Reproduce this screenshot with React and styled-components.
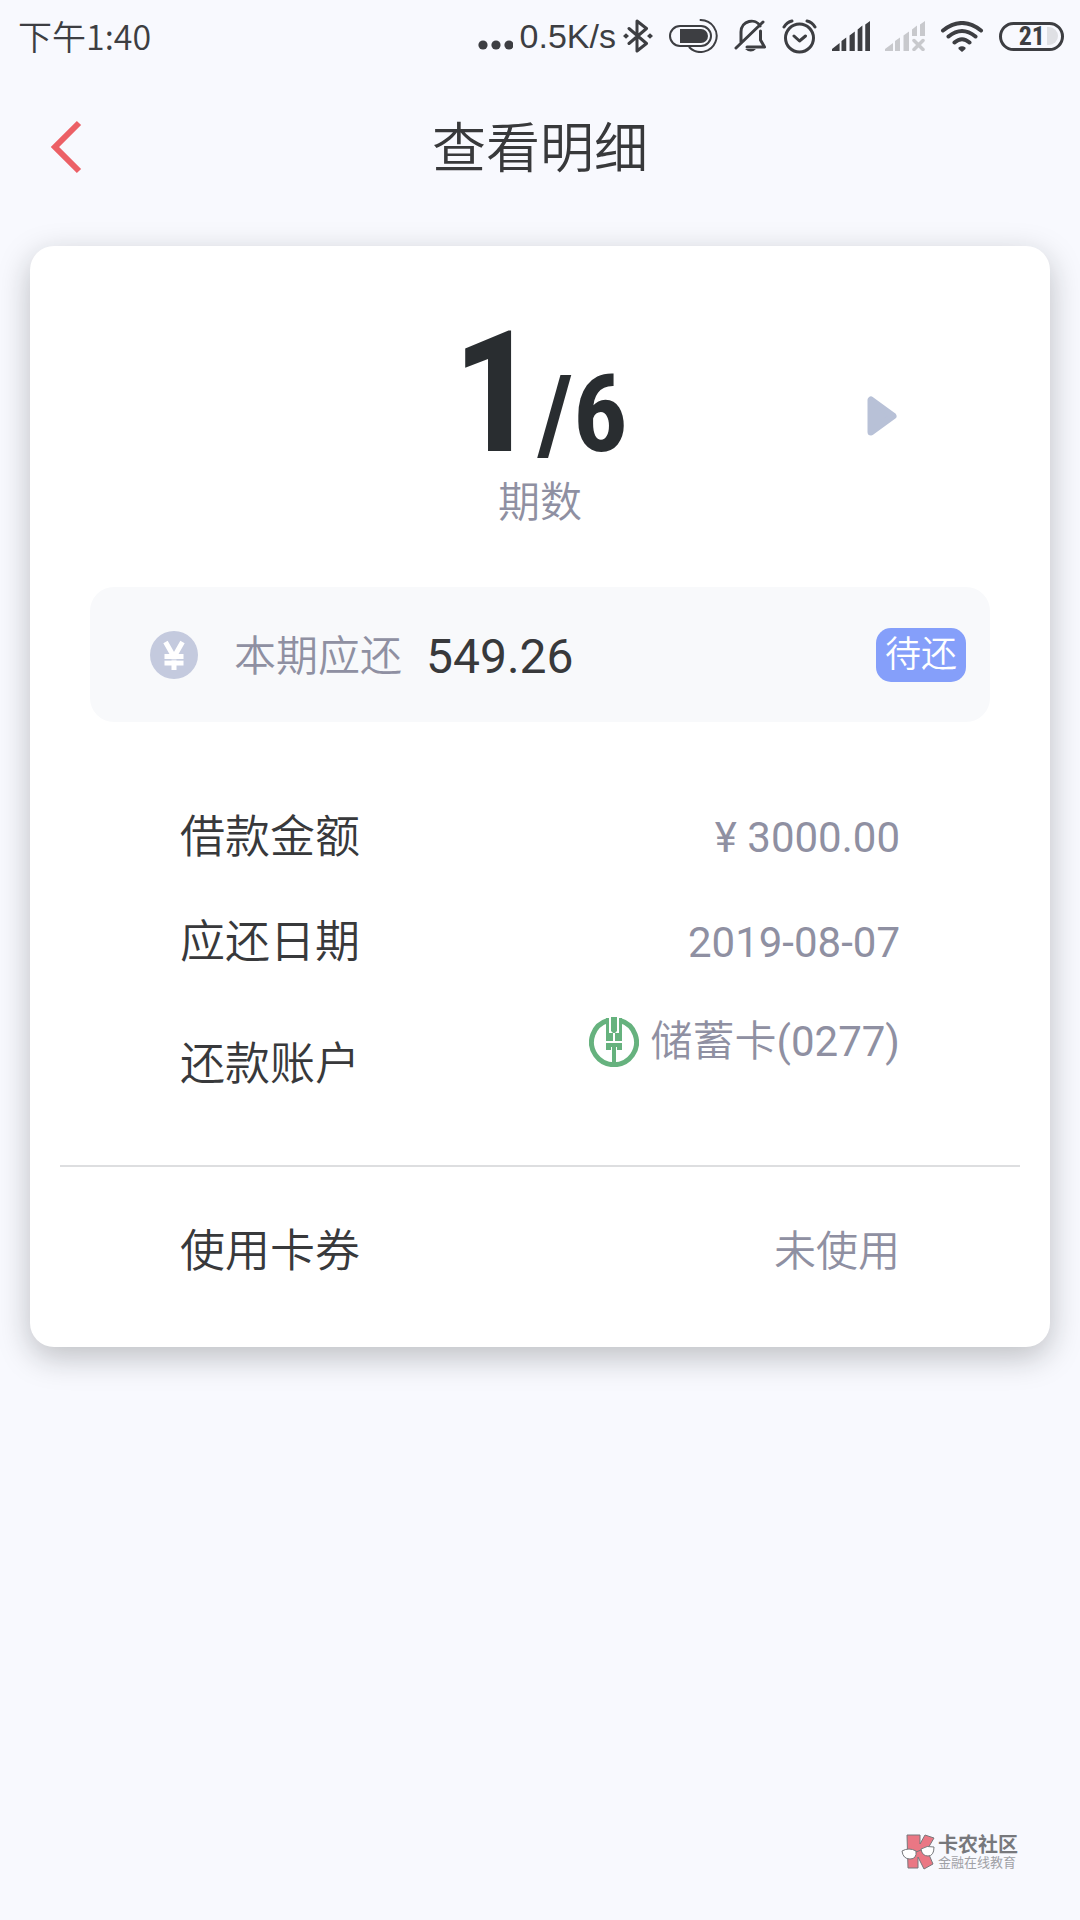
import React from 'react';
import styled, { createGlobalStyle } from 'styled-components';

const Global = createGlobalStyle`
  * { box-sizing: border-box; }
  body {
    margin: 0;
    background: #f8f9fe;
    color: #38393b;
    font-family: Roboto, "Noto Sans CJK SC DemiLight", "Noto Sans CJK SC", sans-serif;
  }
`;

const Page = styled.div`
  min-height: 100vh;
  display: flex;
  flex-direction: column;
`;

const StatusBar = styled.div`
  display: flex;
  align-items: center;
  justify-content: space-between;
  height: 72px;
  padding: 0 16px 0 18px;
  color: #3d3e42;
`;

const Clock = styled.time`
  font: 350 34px/40px "Noto Sans CJK SC DemiLight", "Noto Sans CJK SC", sans-serif;
`;

const StatusIcons = styled.div`
  display: flex;
  align-items: center;
  gap: 15px;

  svg { display: block; }
`;

const Network = styled.span`
  display: flex;
  align-items: center;
  gap: 7px;
  font: 400 34px/40px "Liberation Sans", sans-serif;
`;

const Battery = styled.span`
  display: flex;
  align-items: center;
  justify-content: flex-end;
  gap: 2px;
  width: 65px;
  height: 29px;
  padding-right: 3px;
  border: 3px solid currentColor;
  border-radius: 15px;
  font-family: "Roboto Condensed", "Liberation Sans Narrow", Roboto, sans-serif;
  font-size: 26px;
  line-height: 24px;
  font-weight: 700;

  &::after {
    content: "";
    width: 11px;
    height: 18px;
    border-radius: 0 9px 9px 0;
    background: #dfe0e4;
  }
`;

const Header = styled.header`
  display: grid;
  grid-template-columns: 1fr auto 1fr;
  align-items: center;
  height: 150px;
  margin-bottom: 24px;
  padding: 0 50px;
`;

const BackButton = styled.button`
  justify-self: start;
  padding: 0;
  border: 0;
  background: none;
  cursor: pointer;

  svg { display: block; }
`;

const Title = styled.h1`
  margin: 0;
  padding-bottom: 4px;
  font: 350 54px/72px "Noto Sans CJK SC DemiLight", "Noto Sans CJK SC", sans-serif;
`;

const Card = styled.main`
  margin: 0 30px;
  padding-bottom: 10px;
  border-radius: 24px;
  background: #fff;
  box-shadow: 0 10px 32px rgba(20, 22, 22, 0.26);
`;

const Period = styled.section`
  display: grid;
  grid-template-columns: 1fr auto 1fr;
  padding: 80px 150px 54px;
`;

const PeriodCount = styled.div`
  grid-column: 2;
  display: flex;
  flex-direction: column;
  align-items: center;
  gap: 4px;
`;

const Count = styled.div`
  display: flex;
  align-items: baseline;
  font-family: "Liberation Sans Narrow", "Roboto Condensed", "Liberation Sans", sans-serif;
  font-size: 108px;
  line-height: 110px;
  font-weight: 700;
  color: #292d30;
`;

const Current = styled.span`
  font-size: 168px;
  line-height: 136px;
`;

const Caption = styled.div`
  font-size: 42px;
  line-height: 60px;
  font-weight: 350;
  color: #8f90a2;
`;

const NextButton = styled(BackButton)`
  justify-self: end;
  height: 180px;
`;

const Due = styled.section`
  display: flex;
  align-items: center;
  height: 135px;
  margin: 0 60px;
  padding: 0 24px 0 60px;
  border-radius: 24px;
  background: #f8f9fb;
`;

const DueText = styled.div`
  display: flex;
  align-items: center;
  gap: 24px;
  margin-left: 36px;
  padding-top: 4px;
  line-height: 60px;
`;

const DueLabel = styled.span`
  font-size: 42px;
  font-weight: 350;
  color: #8f90a2;
`;

const DueAmount = styled.strong`
  font-size: 48px;
  font-weight: 400;
`;

const Badge = styled.span`
  margin-left: auto;
  padding: 0 9px;
  border-radius: 15px;
  background: #859ffa;
  color: #fff;
  font-size: 36px;
  line-height: 54px;
  font-weight: 350;
`;

const Details = styled.dl`
  margin: 0;
  padding: ${(p) => (p.$first ? '63px 150px 30px' : '0 150px')};
`;

const Row = styled.div`
  display: flex;
  align-items: center;
  justify-content: space-between;
  height: ${(p) => p.$height}px;
`;

const Label = styled.dt`
  font-size: 45px;
  line-height: 60px;
  font-weight: 350;
`;

const Value = styled.dd`
  display: flex;
  align-items: center;
  align-self: ${(p) => (p.$raised ? 'flex-start' : 'center')};
  gap: 12px;
  height: 94px;
  margin: 0;
  font-size: 42px;
  line-height: 60px;
  font-weight: 400;
  color: #8f90a2;
`;

const Divider = styled.hr`
  margin: 0 30px;
  border: 0;
  border-top: 2px solid #dddee0;
`;

const Footer = styled.footer`
  display: flex;
  justify-content: flex-end;
  align-items: center;
  gap: 3px;
  margin-top: auto;
  padding: 40px 62px 50px;
`;

const Brand = styled.div`
  font: 700 20px/20px "Noto Sans CJK SC", sans-serif;
  color: #77787c;
`;

const Slogan = styled.div`
  font: 400 13px/16px "Noto Sans CJK SC", sans-serif;
  color: #a0a1a6;
`;

const stroke = { fill: 'none', stroke: 'currentColor', strokeLinecap: 'round', strokeLinejoin: 'round' };

function Dots() {
  return (
    <svg width="35" height="34" fill="currentColor">
      <circle cx="5" cy="26" r="4.6" />
      <circle cx="18" cy="26" r="4.6" />
      <circle cx="31" cy="26" r="4.6" />
    </svg>
  );
}

function Bluetooth() {
  return (
    <svg width="30" height="34" viewBox="0 0 30 34">
      <path d="M6 9.500 23.500 24.500 14 32V2l9.500 7.500L6 24.500" {...stroke} strokeWidth="3" />
      <path d="M3 14.200 6 17l-3 2.800L0 17zM27 14.200 30 17l-3 2.800-3-2.800z" fill="currentColor" />
    </svg>
  );
}

function PowerPill() {
  return (
    <svg width="50" height="34" viewBox="0 0 50 34">
      <rect x="2" y="7" width="41" height="20" rx="10" {...stroke} strokeWidth="2" />
      <path d="M12 10h21a7 7 0 0 1 0 14H12z" fill="currentColor" />
      <path d="M32.500 1a16 16 0 1 1-11 27.500" {...stroke} strokeWidth="2" />
    </svg>
  );
}

function BellOff() {
  return (
    <svg width="34" height="34" viewBox="0 0 34 34">
      <path d="M3 29 30 3M8 23V13c0-12 15-14 19-6M27.500 12v9l4 7H14" {...stroke} strokeWidth="3" />
      <path d="M12 30h11q-5 5-11 0z" fill="currentColor" />
    </svg>
  );
}

function Alarm() {
  return (
    <svg width="35" height="35" viewBox="0 0 35 35">
      <circle cx="17.500" cy="19" r="14" {...stroke} strokeWidth="3" />
      <path d="m12 17 5.500 5 6-5M2 8q3-5 8-6M33 8q-3-5-8-6" {...stroke} strokeWidth="3" />
    </svg>
  );
}

function Signal() {
  return (
    <svg width="38" height="30" viewBox="0 0 40 30" preserveAspectRatio="none" fill="currentColor">
      <path d="M0 30v-2l8-6v8zM10 20l5-3.500V30h-5zM18.500 14.500l5.500-4V30h-5.500zM27 8.500l5-4V30h-5zM35 3.500l5-3.500v30h-5z" />
    </svg>
  );
}

function SignalNone() {
  return (
    <svg width="40" height="30" viewBox="0 0 40 30" fill="#c8c9cd">
      <path d="M0 30v-2l8-6v8zM10 20l5-3.500V30h-5zM18.500 14.500l5.500-4V30h-5.500zM27 8.500l5-4V15h-5zM35 3.500l5-3.500v15h-5z" />
      <path d="m29 19.500 9 9m0-9-9 9" stroke="#c8c9cd" strokeWidth="3.500" strokeLinecap="round" />
    </svg>
  );
}

function Wifi() {
  return (
    <svg width="44" height="31" viewBox="0 0 44 31">
      <path d="M3 9.500q19-15 38 0M8.500 15.500q13.500-11 27 0M14.500 21.500q7.500-6.500 15 0" {...stroke} strokeWidth="4" />
      <path d="M18.500 26.500q3.500-2.500 7 0v1.500L22 31l-3.500-3z" fill="currentColor" />
    </svg>
  );
}

function Coin() {
  return (
    <svg width="48" height="48" viewBox="0 0 48 48">
      <circle cx="24" cy="24" r="24" fill="#c4cade" />
      <path d="m15.500 11 8.500 15 8.500-15M14.500 25.500h19M14.500 32h19M24 25v14" fill="none" stroke="#fff" strokeWidth="5" />
      <path d="M14.500 28.800h19" stroke="#c4cade" strokeWidth="1" />
    </svg>
  );
}

function BankLogo() {
  return (
    <svg width="50" height="50" viewBox="0 0 50 50">
      <path d="M19 3.500a22.500 22.500 0 1 0 12 0" fill="none" stroke="#66b27e" strokeWidth="5" />
      <g fill="#66b27e">
        <path d="M17 1h3v15h2v7h-5zM33 1h-3v15h-2v7h5zM22 0h6v14l-2 2h-2l-2-2z" />
        <path d="M17 16h7v8h-7zM26 16h7v8h-7zM17 26h16v7h-5v-3h-1v18h-4V30h-1v3h-5z" />
      </g>
    </svg>
  );
}

function BrandMark() {
  return (
    <svg width="34" height="36" viewBox="0 0 34 36">
      <path d="M6 1h13v9l5-9 9 3-7 12 6 14-9 5-6-12v11H7z" fill="#ea7784" stroke="#77787c" strokeWidth="1" />
      <path d="M1 17q7-4 14 0 1 8-6 8T1 17zM20 15q6-4 13-2 0 9-6 9-6 0-7-7zM15 18l5-2" fill="#fff" stroke="#77787c" strokeWidth="1" />
    </svg>
  );
}

const details = [
  { label: '借款金额', value: '¥ 3000.00', height: 105 },
  { label: '应还日期', value: '2019-08-07', height: 105 },
  { label: '还款账户', value: '储蓄卡(0277)', height: 140, logo: true },
];

export default function App() {
  return (
    <Page>
      <Global />
      <StatusBar>
        <Clock>下午1:40</Clock>
        <StatusIcons>
          <Network><Dots />0.5K/s<Bluetooth /></Network>
          <PowerPill />
          <BellOff />
          <Alarm />
          <Signal />
          <SignalNone />
          <Wifi />
          <Battery>21</Battery>
        </StatusIcons>
      </StatusBar>
      <Header>
        <BackButton type="button" aria-label="返回">
          <svg width="32" height="54" viewBox="0 0 32 54">
            <path d="M29 3 5 27l24 24" fill="none" stroke="#ec6066" strokeWidth="6" />
          </svg>
        </BackButton>
        <Title>查看明细</Title>
      </Header>
      <Card>
        <Period>
          <PeriodCount>
            <Count><Current>1</Current>/6</Count>
            <Caption>期数</Caption>
          </PeriodCount>
          <NextButton type="button" aria-label="下一期">
            <svg width="33" height="40" viewBox="0 0 33 40">
              <path d="M4 4v32l22-16z" fill="#b8c1d7" stroke="#b8c1d7" strokeWidth="7" strokeLinejoin="round" />
            </svg>
          </NextButton>
        </Period>
        <Due>
          <Coin />
          <DueText>
            <DueLabel>本期应还</DueLabel>
            <DueAmount>549.26</DueAmount>
          </DueText>
          <Badge>待还</Badge>
        </Due>
        <Details $first>
          {details.map((d) => (
            <Row key={d.label} $height={d.height}>
              <Label>{d.label}</Label>
              <Value $raised={d.logo}>
                {d.logo && <BankLogo />}
                {d.value}
              </Value>
            </Row>
          ))}
        </Details>
        <Divider />
        <Details>
          <Row $height={170}>
            <Label>使用卡券</Label>
            <Value>未使用</Value>
          </Row>
        </Details>
      </Card>
      <Footer>
        <BrandMark />
        <div>
          <Brand>卡农社区</Brand>
          <Slogan>金融在线教育</Slogan>
        </div>
      </Footer>
    </Page>
  );
}
